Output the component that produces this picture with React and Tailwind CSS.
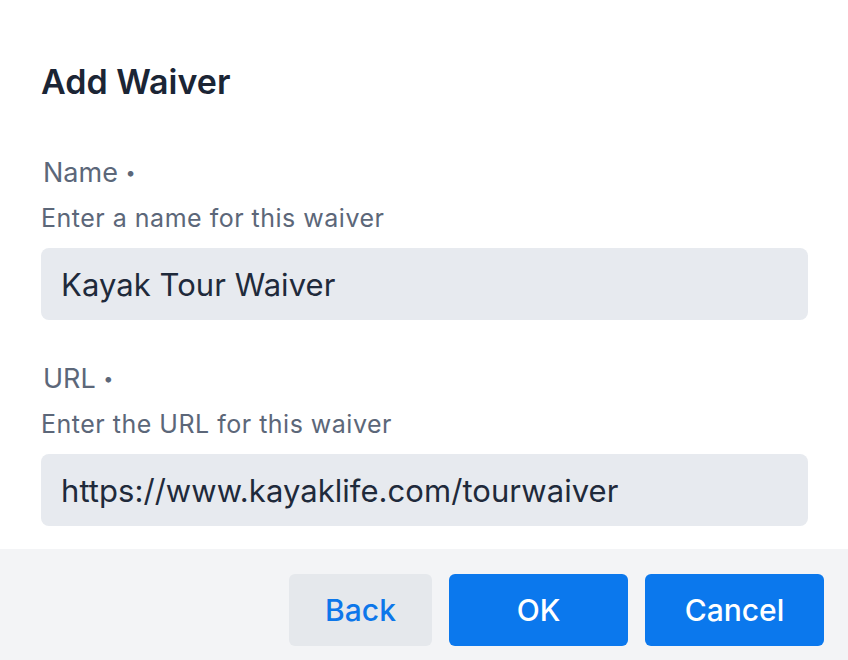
import React, { useState } from "react";

function Field({ label, help, value, onChange }) {
  return (
    <div>
      <div className="h-[32px] text-[27px] leading-[32px] text-[#5c6779] pl-[2px]">
        {label} <span className="text-[18px] leading-none align-[3px]">•</span>
      </div>
      <div className="mt-[14px] text-[25px] leading-[30px] tracking-[0.5px] text-[#5c6779]">{help}</div>
      <input
        value={value}
        onChange={(e) => onChange(e.target.value)}
        className="mt-[15px] block h-[72px] w-full rounded-lg bg-[#e7eaef] px-5 text-[31px] tracking-[0.05px] text-[#1f2a3b] outline-none"
      />
    </div>
  );
}

export default function App() {
  const [name, setName] = useState("Kayak Tour Waiver");
  const [url, setUrl] = useState("https://www.kayaklife.com/tourwaiver");

  return (
    <div className="min-h-screen bg-white font-['Inter',sans-serif]">
      <div className="px-[41px] pt-[62px] pr-[40px]">
        <h1 className="text-[34px] leading-[40px] font-semibold text-[#1b2535]">Add Waiver</h1>

        <div className="mt-[55px] flex flex-col gap-[43px]">
          <Field
            label="Name"
            help="Enter a name for this waiver"
            value={name}
            onChange={setName}
          />
          <Field
            label="URL"
            help="Enter the URL for this waiver"
            value={url}
            onChange={setUrl}
          />
        </div>
      </div>

      <div className="mt-[23px] flex justify-end gap-[17px] bg-[#f3f4f6] pt-[25px] pb-6 pr-6">
        <button className="h-[72px] w-[143px] rounded-md bg-[#e5e8ec] text-[30px] font-medium text-[#0d77ea]">
          Back
        </button>
        <button className="h-[72px] w-[179px] rounded-md bg-[#0b78ed] text-[30px] font-medium text-white">
          OK
        </button>
        <button className="h-[72px] w-[179px] rounded-md bg-[#0b78ed] text-[30px] font-medium text-white">
          Cancel
        </button>
      </div>
    </div>
  );
}
